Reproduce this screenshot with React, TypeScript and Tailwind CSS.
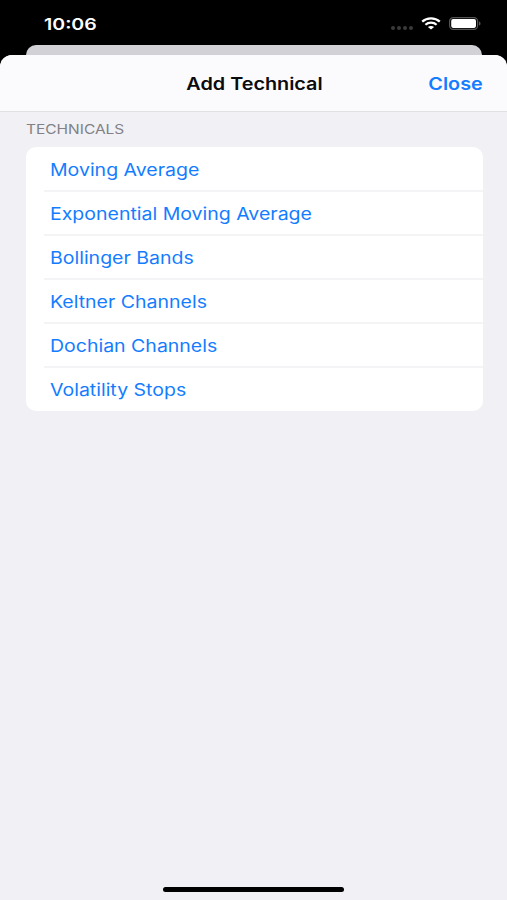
const technicals = [
  { name: "Moving Average" },
  { name: "Exponential Moving Average" },
  { name: "Bollinger Bands" },
  { name: "Keltner Channels" },
  { name: "Dochian Channels" },
  { name: "Volatility Stops" },
];

function WifiIcon() {
  return (
    <svg width="20" height="13" viewBox="0 0 20 13" fill="none" aria-hidden="true">
      <path d="M1.2 4.6C6 .2 14 .2 18.8 4.6" stroke="#fff" strokeWidth="2.3" />
      <path d="M4.4 7.7c3.1-2.8 8.1-2.8 11.2 0" stroke="#fff" strokeWidth="2.2" />
      <path d="M10 12.4 6.9 10c1.8-1.4 4.4-1.4 6.2 0L10 12.4Z" fill="#fff" />
    </svg>
  );
}

function BatteryIcon() {
  return (
    <svg width="33" height="13" viewBox="0 0 33 13" fill="none" aria-hidden="true">
      <rect x=".6" y=".6" width="28" height="11.8" rx="3.6" stroke="#555" strokeWidth="1.2" />
      <rect x="2.2" y="2.1" width="24.8" height="8.8" rx="1.8" fill="#fff" />
      <path d="M30 4.4c2 .6 2 3.6 0 4.2V4.4Z" fill="#555" />
    </svg>
  );
}

function StatusBar() {
  return (
    <div className="flex h-[45px] items-start justify-between pl-[44px] pr-[25px] text-white">
      <span className="mt-[13px] origin-left scale-x-[1.22] text-[16px] font-semibold leading-[22px]">
        10:06
      </span>
      <div className="mt-[17px] flex h-[13px] items-center">
        <div className="mr-[8px] mt-[8px] flex gap-[2px]">
          <span className="h-1 w-1 rounded-full bg-[#3a3a3a]" />
          <span className="h-1 w-1 rounded-full bg-[#3a3a3a]" />
          <span className="h-1 w-1 rounded-full bg-[#3a3a3a]" />
          <span className="h-1 w-1 rounded-full bg-[#3a3a3a]" />
        </div>
        <WifiIcon />
        <div className="ml-2">
          <BatteryIcon />
        </div>
      </div>
    </div>
  );
}

export default function App() {
  return (
    <div className="flex h-[900px] w-[507px] flex-col overflow-hidden bg-black font-['Inter','Liberation_Sans',sans-serif]">
      <StatusBar />
      <div className="ml-[26px] mr-[25px] h-[10px] shrink-0 rounded-t-[10px] bg-[#d1d1d6]" />
      <main className="flex flex-1 flex-col overflow-hidden rounded-t-[12px] bg-[#f0f0f5]">
        <header className="grid h-[57px] shrink-0 grid-cols-[1fr_auto_1fr] items-center border-b border-[#e0e0e4] bg-[#fbfbfd] pl-[25px] pr-[24px] pt-[3px]">
          <span />
          <h1 className="scale-x-[1.165] text-[17px] font-semibold text-[#0b0b0c]">
            Add Technical
          </h1>
          <button className="origin-right scale-x-[1.165] justify-self-end text-[17px] font-semibold text-[#147dff]">
            Close
          </button>
        </header>
        <section className="pl-[26px] pr-[24px]">
          <h2 className="mt-[7px] h-[28px] w-fit origin-left scale-x-[1.19] text-[13px] leading-[21px] text-[#818186]">
            TECHNICALS
          </h2>
          <ul className="h-[264px] overflow-hidden rounded-[10px] bg-white">
            {technicals.map((item, i) => (
              <li
                key={item.name}
                className={`ml-[18px] ${i === 0 ? "h-[45px]" : "h-[44px]"}`}
              >
                <button
                  className={`flex h-full w-full items-start pl-[6px] text-[#147dff] ${
                    i === 0 ? "pt-[12px]" : "pt-[11px]"
                  } ${i < technicals.length - 1 ? "border-b-2 border-[#f4f4f6]" : ""}`}
                >
                  <span className="origin-left scale-x-[1.147] whitespace-nowrap text-[17px] leading-[22px]">
                    {item.name}
                  </span>
                </button>
              </li>
            ))}
          </ul>
        </section>
        <div className="mb-[8px] ml-[163px] mt-auto h-[5px] w-[181px] rounded-full bg-black" />
      </main>
    </div>
  );
}
